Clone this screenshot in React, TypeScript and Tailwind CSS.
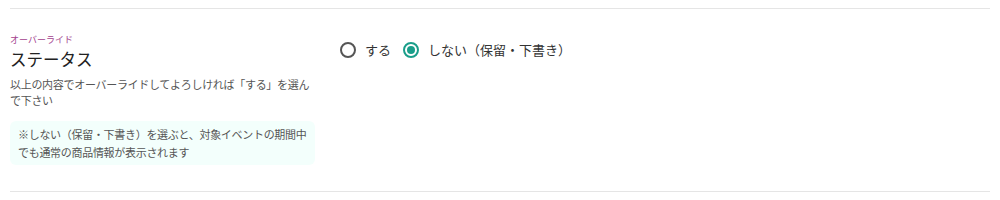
export default function App() {
  const font = { fontFamily: '"Noto Sans CJK JP", "Noto Sans", sans-serif' };
  return (
    <div className="w-[1000px] h-[200px] bg-white px-[10px] pt-[8px]" style={font}>
      <div className="border-t border-[#e5e5e5] h-[184px] border-b flex">
        <div className="w-[305px] pt-[25px]">
          <div className="text-[9px] leading-[12px] text-[#a33f8e]">オーバーライド</div>
          <div className="text-[16.5px] leading-[22px] text-[#222] mt-[2px]">ステータス</div>
          <div className="text-[11px] tracking-[-0.3px] leading-[16px] text-[#555] mt-[6px]">
            以上の内容でオーバーライドしてよろしければ「する」を選んで下さい
          </div>
          <div className="mt-[13px] bg-[#f3fffc] rounded-[6px] px-[8px] py-[4px] text-[11px] tracking-[-0.3px] leading-[18px] text-[#555]">
            ※しない（保留・下書き）を選ぶと、対象イベントの期間中でも通常の商品情報が表示されます
          </div>
        </div>
        <div className="ml-[25px] pt-[31px] flex items-start gap-[12px] text-[13px] leading-[20px] text-[#333]">
          <label className="flex items-center gap-[9px]">
            <span className="w-[16px] h-[16px] rounded-full border-2 border-[#555] box-border"></span>
            <span>する</span>
          </label>
          <label className="flex items-center gap-[9px]">
            <span className="w-[16px] h-[16px] rounded-full border-2 border-[#1a9e8a] box-border flex items-center justify-center">
              <span className="w-[8px] h-[8px] rounded-full bg-[#1a9e8a]"></span>
            </span>
            <span>しない（保留・下書き）</span>
          </label>
        </div>
      </div>
    </div>
  );
}
